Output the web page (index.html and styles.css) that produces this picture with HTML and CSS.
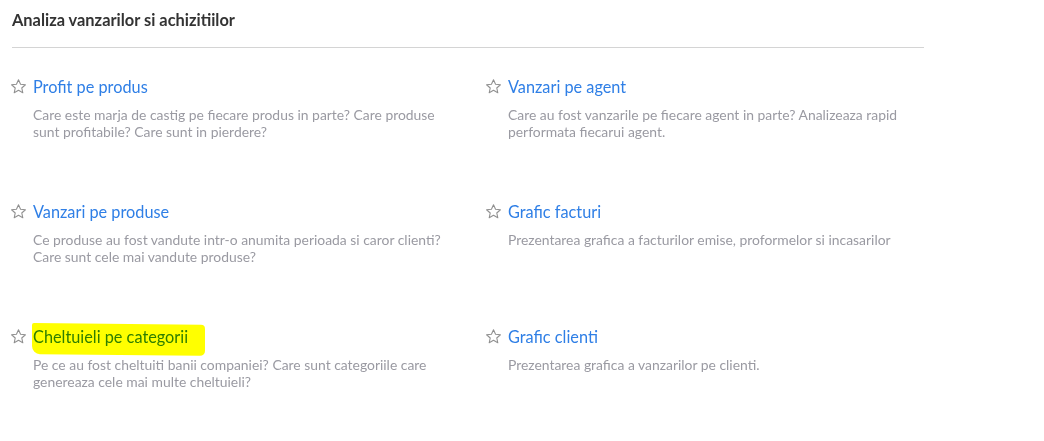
FILE: index.html
```html
<!DOCTYPE html>
<html>
<head>
<meta charset="utf-8">
<link rel="stylesheet" href="styles.css">
</head>
<body>
<div class="page">
  <h2 class="heading">Analiza vanzarilor si achizitiilor</h2>
  <div class="rule"></div>
  <div class="grid">
    <div class="item">
      <div class="title-row"><svg class="star" viewBox="0 0 24 24"><path d="M12 2.5l2.9 6.3 6.9.7-5.2 4.6 1.5 6.8L12 17.4l-6.1 3.5 1.5-6.8-5.2-4.6 6.9-.7z"/></svg><a class="title">Profit pe produs</a></div>
      <p class="desc">Care este marja de castig pe fiecare produs in parte? Care produse sunt profitabile? Care sunt in pierdere?</p>
    </div>
    <div class="item">
      <div class="title-row"><svg class="star" viewBox="0 0 24 24"><path d="M12 2.5l2.9 6.3 6.9.7-5.2 4.6 1.5 6.8L12 17.4l-6.1 3.5 1.5-6.8-5.2-4.6 6.9-.7z"/></svg><a class="title">Vanzari pe agent</a></div>
      <p class="desc">Care au fost vanzarile pe fiecare agent in parte? Analizeaza rapid performata fiecarui agent.</p>
    </div>
    <div class="item">
      <div class="title-row"><svg class="star" viewBox="0 0 24 24"><path d="M12 2.5l2.9 6.3 6.9.7-5.2 4.6 1.5 6.8L12 17.4l-6.1 3.5 1.5-6.8-5.2-4.6 6.9-.7z"/></svg><a class="title">Vanzari pe produse</a></div>
      <p class="desc">Ce produse au fost vandute intr-o anumita perioada si caror clienti? Care sunt cele mai vandute produse?</p>
    </div>
    <div class="item">
      <div class="title-row"><svg class="star" viewBox="0 0 24 24"><path d="M12 2.5l2.9 6.3 6.9.7-5.2 4.6 1.5 6.8L12 17.4l-6.1 3.5 1.5-6.8-5.2-4.6 6.9-.7z"/></svg><a class="title">Grafic facturi</a></div>
      <p class="desc">Prezentarea grafica a facturilor emise, proformelor si incasarilor</p>
    </div>
    <div class="item">
      <div class="title-row"><svg class="star" viewBox="0 0 24 24"><path d="M12 2.5l2.9 6.3 6.9.7-5.2 4.6 1.5 6.8L12 17.4l-6.1 3.5 1.5-6.8-5.2-4.6 6.9-.7z"/></svg><a class="title marked">Cheltuieli pe categorii<span class="marker"></span></a></div>
      <p class="desc">Pe ce au fost cheltuiti banii companiei? Care sunt categoriile care genereaza cele mai multe cheltuieli?</p>
    </div>
    <div class="item">
      <div class="title-row"><svg class="star" viewBox="0 0 24 24"><path d="M12 2.5l2.9 6.3 6.9.7-5.2 4.6 1.5 6.8L12 17.4l-6.1 3.5 1.5-6.8-5.2-4.6 6.9-.7z"/></svg><a class="title">Grafic clienti</a></div>
      <p class="desc">Prezentarea grafica a vanzarilor pe clienti.</p>
    </div>
  </div>
</div>
</body>
</html>
```
FILE: styles.css
```css
html, body {
  margin: 0;
  padding: 0;
  background: #fff;
}
body {
  font-family: Lato, "Liberation Sans", sans-serif;
}
.page {
  padding: 10px 0 0 12px;
  width: 912px;
}
.heading {
  margin: 0;
  font-size: 16.4px;
  line-height: 20px;
  font-weight: 700;
  color: #333;
}
.rule {
  margin-top: 17px;
  height: 1px;
  background: #d4d4d4;
}
.grid {
  display: grid;
  grid-template-columns: 475px 437px;
  grid-auto-rows: 125px;
  padding-top: 29px;
}
.title-row {
  display: flex;
  align-items: center;
  height: 20px;
}
.star {
  width: 17px;
  height: 17px;
  margin-left: -2px;
  margin-right: 6px;
  fill: none;
  stroke: #909090;
  stroke-width: 1.5;
  stroke-linejoin: round;
  position: relative;
  top: -1px;
}
.title {
  font-size: 16.3px;
  line-height: 20px;
  color: #2f7fe6;
  position: relative;
}
.desc {
  margin: 9px 0 0 21px;
  font-size: 13.9px;
  line-height: 17px;
  color: #9a9aa2;
  width: 420px;
}
.marker {
  position: absolute;
  left: -1px;
  right: -17px;
  top: -3px;
  bottom: -8px;
  background: #ffff00;
  mix-blend-mode: multiply;
  border-radius: 2px 4px 5px 8px;
  transform: skewY(0.6deg);
}
```
